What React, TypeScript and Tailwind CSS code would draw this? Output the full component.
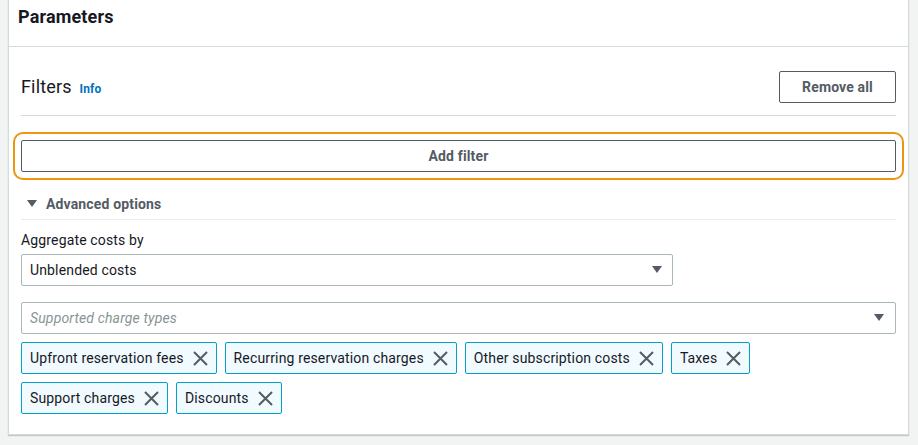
const TOKENS = [
  "Upfront reservation fees",
  "Recurring reservation charges",
  "Other subscription costs",
  "Taxes",
  "Support charges",
  "Discounts",
];

// 下向きキャレット
function Caret() {
  return (
    <svg width="10" height="8" viewBox="0 0 10 8" className="shrink-0">
      <path d="M0 0 H10 L5 7 Z" fill="#545b64" />
    </svg>
  );
}

function CloseIcon() {
  return (
    <svg width="15" height="15" viewBox="0 0 15 15" className="shrink-0">
      <path d="M1 1 L14 14 M14 1 L1 14" stroke="#545b64" strokeWidth="2" fill="none" />
    </svg>
  );
}

export default function App() {
  return (
    <div
      className="min-h-[445px] bg-[#f2f3f3] pl-[8px] pr-[9px] pb-[9px] text-[#16191f] tracking-[0.15px]"
      style={{ fontFamily: "Roboto, 'Noto Sans', sans-serif" }}
    >
      <div className="bg-white border-x border-b border-[#d5dbdb] shadow-[0_1px_1px_0_rgba(0,28,36,0.2)]">
        {/* ヘッダー */}
        <div className="h-[47px] px-[9px] pt-[6px] border-b border-[#d5dbdb]">
          <h2 className="text-[18px] leading-[22px] font-bold">Parameters</h2>
        </div>

        <div className="px-[12px] pb-[20px]">
          {/* Filters */}
          <div className="flex items-center justify-between pt-[24px] pb-[12px] border-b border-[#d5dbdb]">
            <div className="flex items-baseline gap-[8px]">
              <span className="text-[18px] leading-[22px]">Filters</span>
              <span className="text-[12px] font-bold text-[#0073bb]">Info</span>
            </div>
            <button className="h-[32px] w-[117px] border border-[#545b64] rounded-[2px] text-[14px] font-bold text-[#545b64]">
              Remove all
            </button>
          </div>

          <button className="mt-[24px] w-full h-[32px] border border-[#545b64] rounded-[2px] text-[14px] font-bold text-[#545b64] outline-2 outline-offset-[6px] outline-[#ec9510] outline-solid">
            Add filter
          </button>

          {/* Advanced options */}
          <div className="mt-[22px] pb-[5px] border-b border-[#eaeded] flex items-center pl-[6px] gap-[9px]">
            <Caret />
            <span className="text-[14px] leading-[20px] font-bold text-[#545b64]">Advanced options</span>
          </div>

          <div className="mt-[10px] text-[14px] leading-[20px]">Aggregate costs by</div>
          <div className="mt-[4px] w-[652px] h-[32px] border border-[#aab7b8] rounded-[2px] flex items-center justify-between pl-[8px] pr-[10px]">
            <span className="text-[14px]">Unblended costs</span>
            <Caret />
          </div>

          <div className="mt-[16px] h-[32px] border border-[#aab7b8] rounded-[2px] flex items-center justify-between pl-[8px] pr-[11px]">
            <span className="text-[14px] italic text-[#879596]">Supported charge types</span>
            <Caret />
          </div>

          <div className="mt-[8px] flex flex-wrap gap-[8px]">
            {TOKENS.map((t) => (
              <div
                key={t}
                className="h-[32px] flex items-center gap-[9px] pl-[8px] pr-[8px] border border-[#00a1c9] rounded-[2px] bg-[#f1faff]"
              >
                <span className="text-[14px]">{t}</span>
                <CloseIcon />
              </div>
            ))}
          </div>
        </div>
      </div>
    </div>
  );
}
